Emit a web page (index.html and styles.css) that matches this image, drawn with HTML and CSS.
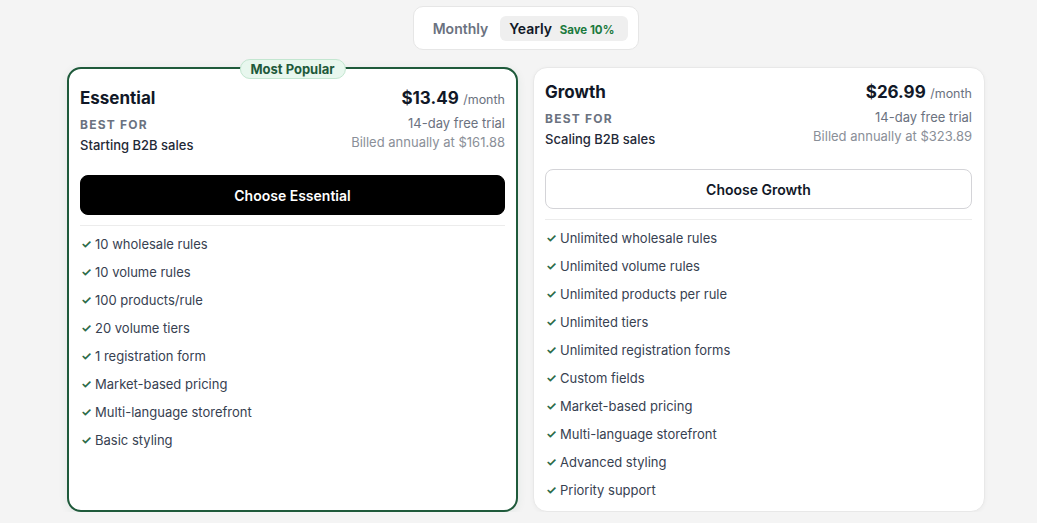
FILE: index.html
```html
<!DOCTYPE html>
<html>
<head>
<meta charset="utf-8">
<link rel="stylesheet" href="styles.css">
</head>
<body>
<div class="wrap">
  <div class="toggle-row">
    <div class="toggle">
      <span class="opt">Monthly</span>
      <span class="opt active">Yearly <span class="save">Save 10%</span></span>
    </div>
  </div>
  <div class="cards">
    <div class="card featured">
      <span class="badge">Most Popular</span>
      <div class="head">
        <div class="left">
          <h3 class="name">Essential</h3>
          <div class="label">BEST FOR</div>
          <div class="sub">Starting B2B sales</div>
        </div>
        <div class="right">
          <div class="price"><span class="amt">$13.49</span> <span class="per">/month</span></div>
          <div class="trial">14-day free trial</div>
          <div class="billed">Billed annually at $161.88</div>
        </div>
      </div>
      <button class="btn dark">Choose Essential</button>
      <hr class="div">
      <ul class="features">
        <li><span class="chk">✓</span>10 wholesale rules</li>
        <li><span class="chk">✓</span>10 volume rules</li>
        <li><span class="chk">✓</span>100 products/rule</li>
        <li><span class="chk">✓</span>20 volume tiers</li>
        <li><span class="chk">✓</span>1 registration form</li>
        <li><span class="chk">✓</span>Market-based pricing</li>
        <li><span class="chk">✓</span>Multi-language storefront</li>
        <li><span class="chk">✓</span>Basic styling</li>
      </ul>
    </div>
    <div class="card">
      <div class="head">
        <div class="left">
          <h3 class="name">Growth</h3>
          <div class="label">BEST FOR</div>
          <div class="sub">Scaling B2B sales</div>
        </div>
        <div class="right">
          <div class="price"><span class="amt">$26.99</span> <span class="per">/month</span></div>
          <div class="trial">14-day free trial</div>
          <div class="billed">Billed annually at $323.89</div>
        </div>
      </div>
      <button class="btn light">Choose Growth</button>
      <hr class="div">
      <ul class="features">
        <li><span class="chk">✓</span>Unlimited wholesale rules</li>
        <li><span class="chk">✓</span>Unlimited volume rules</li>
        <li><span class="chk">✓</span>Unlimited products per rule</li>
        <li><span class="chk">✓</span>Unlimited tiers</li>
        <li><span class="chk">✓</span>Unlimited registration forms</li>
        <li><span class="chk">✓</span>Custom fields</li>
        <li><span class="chk">✓</span>Market-based pricing</li>
        <li><span class="chk">✓</span>Multi-language storefront</li>
        <li><span class="chk">✓</span>Advanced styling</li>
        <li><span class="chk">✓</span>Priority support</li>
      </ul>
    </div>
  </div>
</div>
</body>
</html>
```
FILE: styles.css
```css
* { box-sizing: border-box; }
body {
  margin: 0;
  background: #f4f4f4;
  font-family: Inter, "Noto Sans", sans-serif;
  color: #111827;
}
.wrap {
  width: 918px;
  margin-left: 67px;
  padding-top: 6px;
}
.toggle-row {
  display: flex;
  justify-content: center;
}
.toggle {
  display: flex;
  align-items: center;
  background: #fff;
  border: 1px solid #e6e6e6;
  border-radius: 10px;
  height: 44px;
  padding: 0 10px 0 8px;
}
.opt {
  font-size: 14px;
  font-weight: 600;
  color: #6b7280;
  padding: 0 12px 0 11px;
  height: 25px;
  line-height: 25px;
  border-radius: 6px;
}
.opt.active {
  background: #efefef;
  color: #111827;
  padding: 0 14px 0 9px;
}
.save {
  font-size: 11.5px;
  font-weight: 700;
  color: #1c7a3e;
  margin-left: 4px;
}
.cards {
  display: flex;
  gap: 15px;
  margin-top: 17px;
  align-items: stretch;
}
.card {
  flex: 1 1 0;
  position: relative;
  background: #fff;
  border: 1px solid #e8e8e8;
  border-radius: 14px;
  padding: 13px 12px 11px 11px;
  box-shadow: 0 1px 4px rgba(0,0,0,0.04);
}
.card.featured {
  flex: 0 0 451px;
  border: 2px solid #1f5a3b;
  padding: 18px 11px 12px 11px;
  box-shadow: 0 2px 10px rgba(30,90,60,0.08);
}
.badge {
  position: absolute;
  top: -10px;
  left: 50%;
  transform: translateX(-50%);
  background: #e8f7ee;
  border: 1px solid #c3e6d0;
  color: #1f5a3b;
  font-size: 13px;
  font-weight: 700;
  line-height: 18px;
  padding: 0 10px;
  border-radius: 10px;
  white-space: nowrap;
}
.head {
  display: flex;
  justify-content: space-between;
  align-items: flex-start;
}
.name {
  margin: 0;
  font-size: 17px;
  font-weight: 700;
  line-height: 22px;
  color: #111827;
}
.label {
  margin-top: 8px;
  font-size: 12px;
  font-weight: 700;
  letter-spacing: 1.2px;
  line-height: 16px;
  color: #6b7280;
}
.sub {
  margin-top: 3px;
  font-size: 13px;
  font-weight: 500;
  line-height: 18px;
  color: #1f2937;
}
.right { text-align: right; }
.price { line-height: 22px; }
.amt {
  font-size: 17px;
  font-weight: 700;
  color: #111827;
}
.per {
  font-size: 12.5px;
  color: #6b7280;
}
.trial {
  margin-top: 3px;
  font-size: 13px;
  line-height: 18px;
  color: #6b7280;
}
.billed {
  margin-top: 1px;
  font-size: 13px;
  line-height: 18px;
  color: #8a8f98;
}
.btn {
  display: block;
  width: 100%;
  height: 40px;
  margin-top: 21px;
  border-radius: 8px;
  font-family: Inter, "Noto Sans", sans-serif;
  font-size: 14px;
  font-weight: 600;
  cursor: pointer;
}
.btn.dark {
  background: #000;
  color: #fff;
  border: 1px solid #000;
}
.btn.light {
  background: #fff;
  color: #111827;
  border: 1px solid #d4d4d8;
}
.div {
  border: 0;
  border-top: 1px solid #ececec;
  margin: 10px 0 0 0;
}
.features {
  list-style: none;
  margin: 8px 0 0 0;
  padding: 0;
  display: flex;
  flex-direction: column;
  gap: 8px;
}
.features li {
  font-size: 13px;
  line-height: 20px;
  color: #374151;
  display: flex;
  align-items: center;
}
.chk {
  color: #2b6b4a;
  font-size: 12px;
  font-weight: 700;
  width: 15px;
  padding-left: 1px;
}
```
